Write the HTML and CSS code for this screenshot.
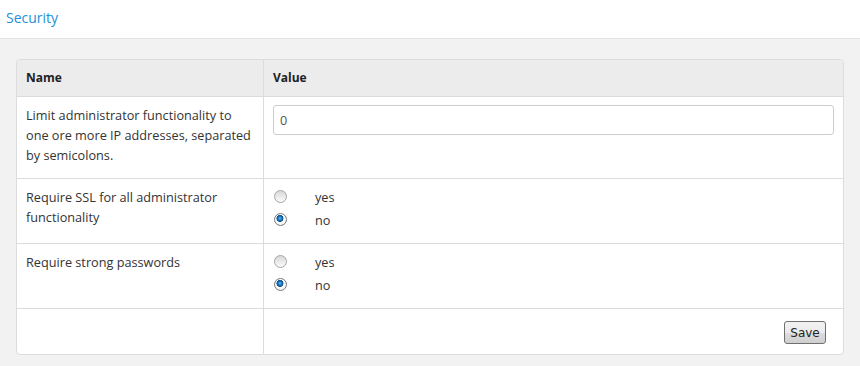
FILE: index.html
```html
<!DOCTYPE html>
<html lang="en">
<head>
    <meta charset="UTF-8">
    <meta name="viewport" content="width=device-width, initial-scale=1.0">
    <title>Security</title>
    <link rel="stylesheet" href="styles.css">
</head>
<body>
    <div class="page-header">
        <h1 class="page-title">Security</h1>
    </div>

    <div class="content">
        <form class="settings" id="security-form">
            <div class="row row-head">
                <div class="cell">Name</div>
                <div class="cell">Value</div>
            </div>
            <div class="row row-ip">
                <div class="cell">Limit administrator functionality to one ore more IP addresses, separated by semicolons.</div>
                <div class="cell">
                    <input type="text" class="text-input" name="ip" value="0">
                </div>
            </div>
            <div class="row row-option">
                <div class="cell">Require SSL for all administrator functionality</div>
                <div class="cell options">
                    <label class="option"><input type="radio" name="ssl" value="yes"><span>yes</span></label>
                    <label class="option"><input type="radio" name="ssl" value="no" checked><span>no</span></label>
                </div>
            </div>
            <div class="row row-option">
                <div class="cell">Require strong passwords</div>
                <div class="cell options">
                    <label class="option"><input type="radio" name="strong" value="yes"><span>yes</span></label>
                    <label class="option"><input type="radio" name="strong" value="no" checked><span>no</span></label>
                </div>
            </div>
            <div class="row row-actions">
                <div class="cell"></div>
                <div class="cell actions">
                    <button type="submit" class="save-button">Save</button>
                </div>
            </div>
        </form>
    </div>
</body>
</html>
```

FILE: styles.css
```css
body {
    margin: 0;
    font-family: 'Open Sans', 'Noto Sans', sans-serif;
    font-size: 12.7px;
    color: #333;
    background-color: #f2f2f2;
}

.page-header {
    height: 39px;
    background-color: white;
    border-bottom: 1px solid #e2e2e2;
    padding-left: 6px;
    box-sizing: border-box;
}

.page-title {
    margin: 0;
    font-size: 14px;
    font-weight: normal;
    line-height: 36px;
    color: #1f90d8;
}

.content {
    padding: 20px 16px 12px;
}

.settings {
    background-color: white;
    border: 1px solid #dcdcdc;
    border-radius: 4px;
    overflow: hidden;
}

.row {
    display: grid;
    grid-template-columns: 247px 1fr;
    border-bottom: 1px solid #dcdcdc;
}

.row:last-child {
    border-bottom: none;
}

.cell {
    padding: 8px 9px;
    line-height: 20px;
}

.cell:first-child {
    border-right: 1px solid #dcdcdc;
}

.row-head {
    height: 37px;
    box-sizing: border-box;
    background-color: #ececec;
    font-size: 12px;
    font-weight: bold;
    color: #222;
}

.row-head .cell {
    padding: 0 9px;
    line-height: 36px;
}

.row-ip {
    height: 82px;
    box-sizing: border-box;
}

.text-input {
    display: block;
    width: 100%;
    height: 30px;
    box-sizing: border-box;
    border: 1px solid #cccccc;
    border-radius: 3px;
    padding: 0 6px;
    font-family: inherit;
    font-size: 12.7px;
    color: #555;
}

.row-option {
    height: 65px;
    box-sizing: border-box;
}

.options {
    padding-top: 6px;
}

.option {
    display: flex;
    align-items: center;
    height: 23px;
}

.option input {
    appearance: none;
    -webkit-appearance: none;
    width: 13px;
    height: 13px;
    margin: 0 28px 0 1px;
    border: 1px solid #a6a6a6;
    border-radius: 50%;
    background: linear-gradient(#d8d8d8, #fbfbfb);
    box-sizing: border-box;
}

.option input:checked {
    border-color: #7a7a7a;
    background: radial-gradient(circle at 45% 40%, #6ab8ee 0, #1473be 2px, #0a4f8c 3.2px, #ffffff 3.8px, #e6e6e6 100%);
}

.row-actions {
    height: 45px;
}

.actions {
    display: flex;
    justify-content: flex-end;
    align-items: flex-start;
    padding: 12px 17px 0 9px;
}

.save-button {
    width: 42px;
    height: 23px;
    padding: 0;
    font-family: 'DejaVu Sans', sans-serif;
    font-size: 12px;
    color: #222;
    border: 1px solid #707070;
    border-radius: 3px;
    background: linear-gradient(#f2f2f2 0%, #ebebeb 50%, #dddddd 51%, #cfcfcf 100%);
    cursor: pointer;
}
```
